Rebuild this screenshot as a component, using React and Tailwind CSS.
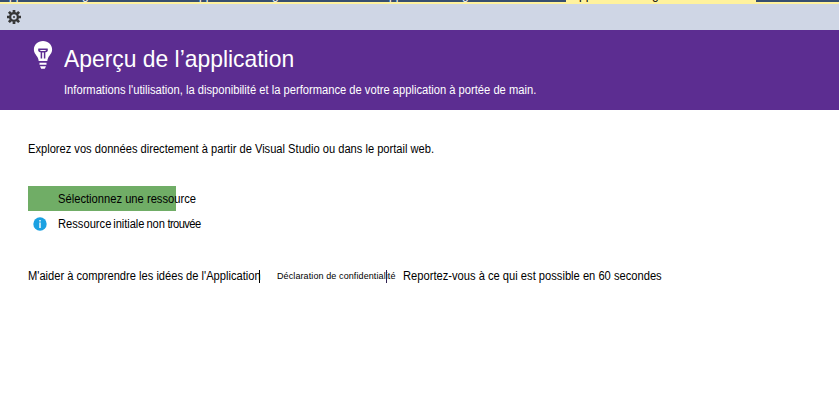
const tabs = [false, false, false, true];

function Gear() {
  return (
    <svg className="h-[14px] w-[14px] shrink-0" viewBox="0 0 14 14" fill="none" stroke="#353535">
      <circle cx="7" cy="7" r="3.900" strokeWidth="2.300" />
      <circle cx="7" cy="7" r="1" fill="#353535" stroke="none" />
      <path strokeWidth="2.700" d="M7 0v2.500M7 11.500V14M0 7h2.500M11.500 7H14M1.900 1.900l1.900 1.900M10.200 10.200l1.900 1.900M12.100 1.900l-1.900 1.900M3.800 10.200l-1.900 1.900" />
    </svg>
  );
}

function Bulb() {
  return (
    <svg className="h-[30px] w-[20px] shrink-0" viewBox="0 0 20 30">
      <path fill="#fff" d="M10 1C4.700 1 .9 4.700 .9 9.500c0 4 2.700 5.600 3.900 8.200.5 1.100.7 2.100.9 3.300h8.600c.2-1.200.4-2.200.9-3.300 1.200-2.600 3.900-4.200 3.900-8.200C19.100 4.700 15.300 1 10 1z" />
      <path fill="none" stroke="#5c2d91" strokeWidth="1.500" d="M8.400 18.500V12.500M11.600 12.500v6M5.300 9.300h9.400M5.800 9.500c0 1.500 1.100 2.200 2.600 2.200h3.200c1.500 0 2.600-.7 2.600-2.200" />
      <path fill="#fff" d="M6.500 22.700h7v2h-7zM7 26.200h6l-1.200 2.600H8.200z" />
    </svg>
  );
}

export default function App() {
  return (
    <div className="flex h-[417px] w-[839px] flex-col overflow-hidden bg-white font-['Liberation_Sans',Arial,sans-serif] text-[12px] leading-[16px] whitespace-nowrap text-black">
      <div className="flex h-[4px] shrink-0 flex-col bg-[#364e6f]">
        <div className="flex h-[2px] items-end">
          {tabs.map((active, i) => (
            <div
              key={i}
              className={
                active
                  ? "ml-[-4px] flex h-[2px] w-[190px] items-end bg-[#fff29d] pl-[5px] text-black"
                  : "flex h-[2px] w-[190px] items-end pl-px text-white"
              }
            >
              <span className="mb-[-0.5px] shrink-0 tracking-[0.02px]">Application Insights</span>
            </div>
          ))}
        </div>
        <div className="h-[2px] bg-[#fff29d]" />
      </div>

      <div className="flex h-[26px] shrink-0 items-center bg-[#cfd6e5] pl-[7px]">
        <Gear />
      </div>

      <header className="flex h-[80px] shrink-0 bg-[#5c2d91] pt-[10px] pl-[33px] text-white">
        <Bulb />
        <div className="pl-[11px]">
          <h1 className="origin-left scale-x-[0.953] pt-[3px] text-[24px] leading-[32px]">Aperçu de l’application</h1>
          <p className="origin-left scale-x-[0.931] pt-[7px]">
            Informations l'utilisation, la disponibilité et la performance de votre application à portée de main.
          </p>
        </div>
      </header>

      <main className="flex flex-col pt-[31px] pl-[28px]">
        <p className="origin-left scale-x-[0.927]">
          Explorez vos données directement à partir de Visual Studio ou dans le portail web.
        </p>
        <button className="mt-[29px] flex h-[25px] w-[148px] items-center bg-[#70ad66] pl-[30px] text-left">
          <span className="origin-left scale-x-[0.932]">Sélectionnez une ressource</span>
        </button>
        <div className="mt-[5px] flex h-[16px] items-center">
          <svg className="mr-[11px] ml-[5px] h-[14px] w-[14px]" viewBox="0 0 14 14">
            <circle cx="7" cy="7" r="6.700" fill="#1ba1e2" />
            <path fill="#fff" d="M6.300 3h1.400v1.400H6.300zM6.300 5.500h1.400V11H6.300z" />
          </svg>
          <span className="origin-left scale-x-[0.93]">
            Ressource<span className="tracking-[-1.2px]"> </span>
            <span className="tracking-[-0.08px]">initiale</span>
            <span className="tracking-[-1.2px]"> </span>non
            <span className="tracking-[-0.65px]"> trouvée</span>
          </span>
        </div>
        <div className="mt-[36px] flex h-[16px] items-center">
          <span className="w-[231px] origin-left scale-x-[0.928]">M'aider à comprendre les idées de l'Application</span>
          <span className="-mr-px h-[13px] w-px bg-black" />
          <span className="ml-[18px] w-[109px] text-[9px] tracking-[0.1px]">Déclaration de confidentialité</span>
          <span className="h-[13px] w-px bg-[#302050]" />
          <span className="ml-[16px] origin-left scale-x-[0.93]">Reportez-vous à ce qui est possible en 60 secondes</span>
        </div>
      </main>
    </div>
  );
}
